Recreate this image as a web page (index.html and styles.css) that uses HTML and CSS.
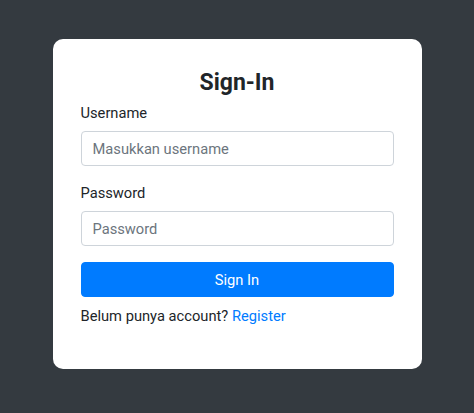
FILE: index.html
```html
<!DOCTYPE html>
<html lang="id">
<head>
    <meta charset="UTF-8">
    <title>Sign-In</title>
    <link rel="stylesheet" href="styles.css">
</head>
<body>
    <div class="login-card">
        <h3 class="title">Sign-In</h3>
        <form id="loginForm">
            <div class="form-group">
                <label for="username">Username</label>
                <input type="text" id="username" class="form-control" placeholder="Masukkan username">
            </div>
            <div class="form-group">
                <label for="password">Password</label>
                <input type="password" id="password" class="form-control" placeholder="Password">
            </div>
            <button type="submit" class="btn-primary">Sign In</button>
        </form>
        <p class="register-text">Belum punya account? <a href="#">Register</a></p>
    </div>
</body>
</html>
```

FILE: styles.css
```css
body {
    font-family: Roboto, "Noto Sans", sans-serif;
    font-size: 14.7px;
    line-height: 1.5;
    background-color: #343a40;
    color: #212529;
    margin: 0;
    padding: 39px 0 0;
    height: 413px;
    box-sizing: border-box;
}
.login-card {
    width: 369px;
    height: 330px;
    box-sizing: border-box;
    margin: 0 auto;
    padding: 28px 28px 28px;
    background-color: #fff;
    border-radius: 10px;
}
.title {
    margin: 0 0 4px;
    font-size: 23px;
    font-weight: 700;
    line-height: 31px;
    text-align: center;
}
.form-group {
    margin-bottom: 16px;
}
label {
    display: block;
    margin-bottom: 7px;
}
.form-control {
    display: block;
    width: 100%;
    height: 35px;
    box-sizing: border-box;
    padding: 5px 11px;
    font-family: inherit;
    font-size: 14.7px;
    color: #495057;
    border: 1px solid #ced4da;
    border-radius: 4px;
    outline: none;
}
.form-control::placeholder {
    color: #6c757d;
}
.btn-primary {
    display: block;
    width: 100%;
    height: 35px;
    margin: 0;
    font-family: inherit;
    font-size: 14.7px;
    color: #fff;
    background-color: #007bff;
    border: 1px solid #007bff;
    border-radius: 4px;
    cursor: pointer;
}
.register-text {
    margin: 8px 0 0;
}
.register-text a {
    color: #007bff;
    text-decoration: none;
}
```
